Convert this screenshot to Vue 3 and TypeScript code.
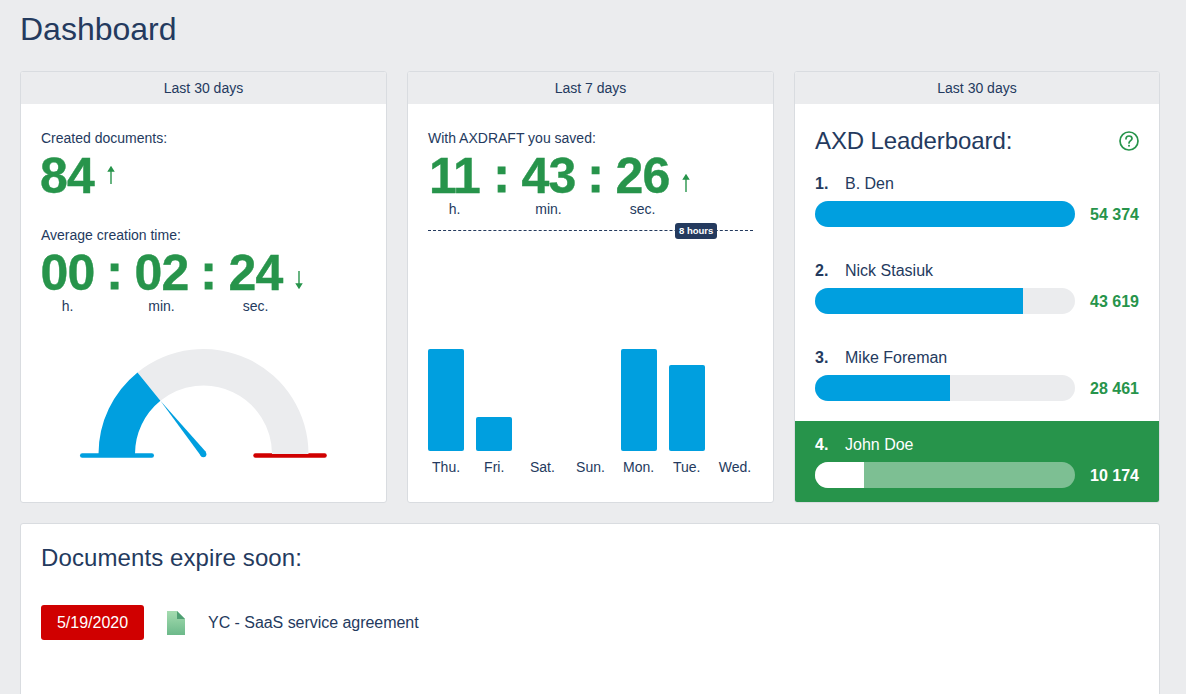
<script setup lang="ts">
const bars = [
  { d: 'Thu.', h: 102 }, { d: 'Fri.', h: 34 }, { d: 'Sat.', h: 0 }, { d: 'Sun.', h: 0 },
  { d: 'Mon.', h: 102 }, { d: 'Tue.', h: 86 }, { d: 'Wed.', h: 0 },
]
const leaders = [
  { n: 1, name: 'B. Den', pct: 100, score: '54 374', me: false },
  { n: 2, name: 'Nick Stasiuk', pct: 80, score: '43 619', me: false },
  { n: 3, name: 'Mike Foreman', pct: 52, score: '28 461', me: false },
  { n: 4, name: 'John Doe', pct: 19, score: '10 174', me: true },
]
const t1 = [{ v: '00', u: 'h.' }, { v: '02', u: 'min.' }, { v: '24', u: 'sec.' }]
const t2 = [{ v: '11', u: 'h.' }, { v: '43', u: 'min.' }, { v: '26', u: 'sec.' }]
</script>

<template>
  <div class="page">
    <h1 class="title">Dashboard</h1>
    <div class="cards">
      <section class="card">
        <header class="head">Last 30 days</header>
        <div class="body first">
          <div class="label">Created documents:</div>
          <div class="big-row">
            <span class="num">84</span>
            <svg class="arrow up-one" width="10" height="20" viewBox="0 0 10 20"><path d="M5 19V2M2.5 6 L5 2 L7.5 6Z" stroke="#27944b" stroke-width="1.4" fill="#27944b"/></svg>
          </div>
          <div class="label second">Average creation time:</div>
          <div class="time">
            <template v-for="(s, i) in t1" :key="s.u">
              <div class="seg"><span class="num">{{ s.v }}</span><span class="unit">{{ s.u }}</span></div>
              <span v-if="i < 2" class="colon">:</span>
            </template>
            <svg class="arrow down" width="10" height="20" viewBox="0 0 10 20"><path d="M5 1V18M2.5 14 L5 18 L7.5 14Z" stroke="#27944b" stroke-width="1.4" fill="#27944b"/></svg>
          </div>
          <svg class="gauge" width="367" height="125" viewBox="0 0 367 125">
            <rect x="59" y="109.3" width="74" height="4.4" rx="2.2" fill="#009fdf"/>
            <rect x="232.3" y="109.3" width="73.5" height="4.4" rx="2.2" fill="#d00000"/>
            <path d="M116.5 28.4 A105 105 0 0 1 287.5 110 H251 A68.5 68.5 0 0 0 139.4 56.8 Z" fill="#ebecee"/>
            <path d="M77.5 110 A105 105 0 0 1 116.5 28.4 L139.4 56.8 A68.5 68.5 0 0 0 114 110 Z" fill="#009fdf"/>
            <path d="M139.4 56.8 L185 108 L180 112 Z" fill="#009fdf"/>
            <circle cx="182.4" cy="110.3" r="3" fill="#009fdf"/>
          </svg>
        </div>
      </section>

      <section class="card">
        <header class="head">Last 7 days</header>
        <div class="body first">
          <div class="label">With AXDRAFT you saved:</div>
          <div class="time">
            <template v-for="(s, i) in t2" :key="s.u">
              <div class="seg"><span class="num">{{ s.v }}</span><span class="unit">{{ s.u }}</span></div>
              <span v-if="i < 2" class="colon">:</span>
            </template>
            <svg class="arrow down" width="10" height="20" viewBox="0 0 10 20"><path d="M5 19V2M2.5 6 L5 2 L7.5 6Z" stroke="#27944b" stroke-width="1.4" fill="#27944b"/></svg>
          </div>
          <div class="limit"><span class="badge">8 hours</span></div>
          <div class="chart">
            <div v-for="b in bars" :key="b.d" class="col">
              <div class="bar" :style="{ height: b.h + 'px' }"></div>
              <span class="day">{{ b.d }}</span>
            </div>
          </div>
        </div>
      </section>

      <section class="card">
        <header class="head">Last 30 days</header>
        <div class="board">
          <div class="board-title">
            <span>AXD Leaderboard:</span>
            <svg width="20" height="20" viewBox="0 0 20 20" fill="none" stroke="#27944b" stroke-width="1.7">
              <circle cx="10" cy="10" r="9"/>
              <path d="M7 7.8 C7 5.8 8.4 5 10 5 C11.7 5 13 6 13 7.6 C13 9.6 10 9.8 10 12" stroke-linecap="round"/>
              <circle cx="10" cy="14.7" r="1" fill="#27944b" stroke="none"/>
            </svg>
          </div>
          <div v-for="l in leaders" :key="l.n" class="leader" :class="{ me: l.me }">
            <div class="who"><b class="rank">{{ l.n }}.</b><span>{{ l.name }}</span></div>
            <div class="row">
              <div class="track"><div class="fill" :style="{ width: l.pct + '%' }"></div></div>
              <b class="score">{{ l.score }}</b>
            </div>
          </div>
        </div>
      </section>
    </div>

    <section class="card expire">
      <h2 class="expire-title">Documents expire soon:</h2>
      <div class="doc">
        <span class="date">5/19/2020</span>
        <svg class="file" width="18" height="24" viewBox="0 0 18 24">
          <defs>
            <linearGradient id="fg" x1="0" y1="0" x2="0" y2="1">
              <stop offset="0" stop-color="#a5dcb0"/>
              <stop offset="1" stop-color="#6cb98a"/>
            </linearGradient>
          </defs>
          <path d="M0 0H10L18 8V24H0Z" fill="url(#fg)"/>
          <path d="M10 0L18 8H10Z" fill="#4f9f73"/>
        </svg>
        <span class="doc-name">YC - SaaS service agreement</span>
      </div>
    </section>
  </div>
</template>

<style>
html, body { margin: 0; background: #ebecee; overflow: hidden; }
</style>

<style scoped>
.page {
  height: 694px;
  overflow: hidden;
  box-sizing: border-box;
  padding: 0 26px 0 20px;
  background: #ebecee;
  color: #243a5e;
  font-family: "Liberation Sans", Arial, sans-serif;
}
.title { margin: 0; padding-top: 11px; height: 71px; box-sizing: border-box; font-size: 32px; line-height: 36px; font-weight: 400; }
.cards { display: grid; grid-template-columns: 367px 367px 366px; gap: 20px; }
.card { background: #fff; border: 1px solid #d9dce0; border-radius: 3px; box-sizing: border-box; height: 432px; overflow: hidden; }
.head { height: 32px; background: #ebecee; text-align: center; font-size: 14px; line-height: 33px; }
.body { padding: 0 20px; position: relative; }
.first { padding-top: 25px; }
.label { font-size: 14px; line-height: 18px; }
.second { margin-top: 27px; }
.big-row { display: flex; align-items: center; height: 45px; margin-top: 7px; }
.num { font-size: 50px; font-weight: 700; line-height: 45px; letter-spacing: -0.9px; color: #27944b; -webkit-text-stroke: 0.4px #27944b; }
.big-row .num { margin-left: -1px; }
.arrow { margin-left: 12px; }
.up-one { margin-top: -3px; }
.time { display: flex; align-items: flex-start; margin-top: 7px; }
.seg { display: flex; flex-direction: column; align-items: center; width: 53px; }
.seg .num { white-space: nowrap; }
.unit { font-size: 14px; line-height: 18px; margin-top: 1px; }
.colon { font-size: 50px; font-weight: 700; line-height: 42px; width: 41px; text-align: center; color: #27944b; -webkit-text-stroke: 0.8px #27944b; }
.down { margin: 19px 0 0 12px; }
.gauge { position: absolute; left: 0; top: 240px; }
.limit { position: relative; border-top: 1px dashed #243a5e; margin-top: 12px; height: 0; }
.badge { position: absolute; left: 247px; top: -8px; height: 16px; line-height: 16px; padding: 0 4px; background: #243a5e; color: #fff; font-size: 9.5px; font-weight: 700; border-radius: 3px; }
.chart { display: flex; gap: 12px; align-items: flex-end; margin-top: 117px; height: 127px; }
.col { flex: 1; display: flex; flex-direction: column; justify-content: flex-end; align-items: center; }
.bar { width: 100%; background: #009fdf; border-radius: 2px; }
.day { font-size: 14px; line-height: 16px; margin-top: 8px; height: 16px; white-space: nowrap; }
.board { display: flex; flex-direction: column; }
.board-title { display: flex; justify-content: space-between; align-items: center; padding: 0 20px; margin-top: 23px; height: 28px; font-size: 24px; letter-spacing: -0.1px; }
.leader { padding: 0 20px; height: 87px; box-sizing: border-box; }
.board-title + .leader { margin-top: 17px; }
.who { display: flex; font-size: 16px; line-height: 22px; padding-top: 1px; }
.rank { width: 30px; font-size: 16px; }
.row { display: flex; align-items: center; margin-top: 6px; }
.track { width: 260px; height: 26px; background: #ebecee; border-radius: 13px; overflow: hidden; flex: none; }
.fill { height: 100%; background: #009fdf; }
.score { margin-left: auto; padding-top: 2px; font-size: 16px; color: #27944b; }
.me { background: #27944b; color: #fff; height: 82px; padding-top: 12px; margin-top: -12px; }
.me .track { background: rgba(255, 255, 255, 0.4); }
.me .fill { background: #fff; }
.me .score { color: #fff; }
.expire { margin-top: 20px; height: 300px; padding: 20px; }
.expire-title { margin: 0; font-size: 24px; line-height: 28px; font-weight: 400; letter-spacing: 0.1px; }
.doc { display: flex; align-items: center; margin-top: 33px; }
.date { width: 103px; height: 35px; line-height: 35px; text-align: center; background: #d00000; color: #fff; font-size: 16px; border-radius: 3px; }
.file { margin-left: 23px; }
.doc-name { margin-left: 23px; font-size: 16px; letter-spacing: -0.04px; }
</style>
